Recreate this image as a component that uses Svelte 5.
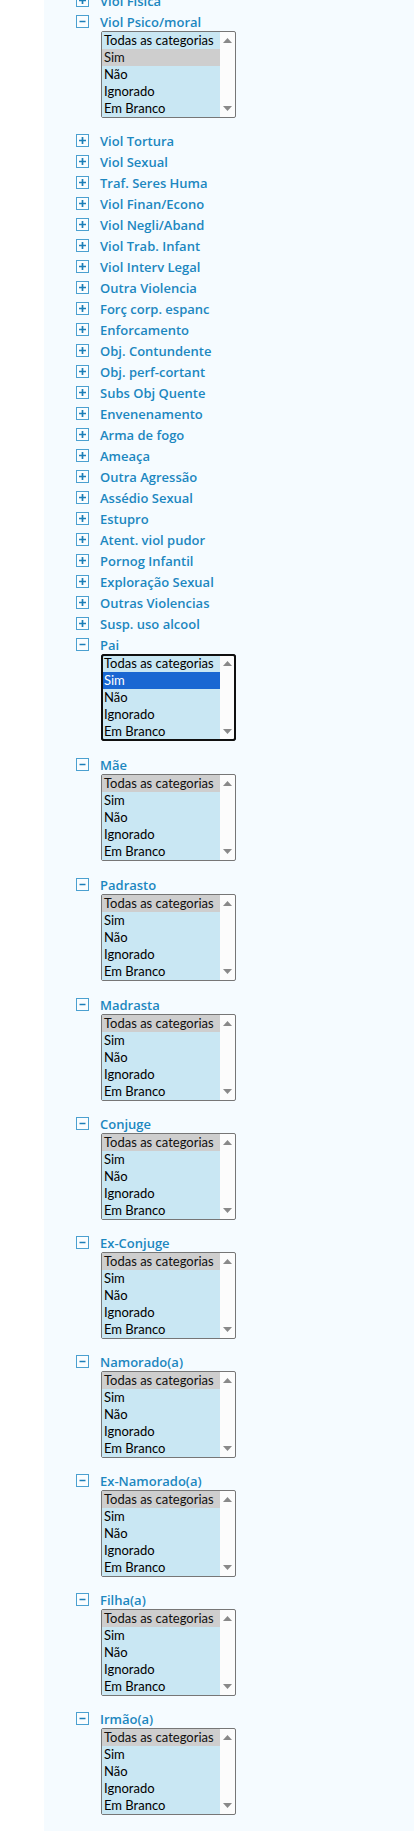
<script>
  const names = [
    'Viol Física', 'Viol Psico/moral', 'Viol Tortura', 'Viol Sexual', 'Traf. Seres Huma',
    'Viol Finan/Econo', 'Viol Negli/Aband', 'Viol Trab. Infant', 'Viol Interv Legal',
    'Outra Violencia', 'Forç corp. espanc', 'Enforcamento', 'Obj. Contundente',
    'Obj. perf-cortant', 'Subs Obj Quente', 'Envenenamento', 'Arma de fogo', 'Ameaça',
    'Outra Agressão', 'Assédio Sexual', 'Estupro', 'Atent. viol pudor', 'Pornog Infantil',
    'Exploração Sexual', 'Outras Violencias', 'Susp. uso alcool', 'Pai', 'Mãe', 'Padrasto',
    'Madrasta', 'Conjuge', 'Ex-Conjuge', 'Namorado(a)', 'Ex-Namorado(a)', 'Filha(a)', 'Irmão(a)'
  ];
  const parents = ['Pai', 'Mãe', 'Padrasto'];
  const options = ['Todas as categorias', 'Sim', 'Não', 'Ignorado', 'Em Branco'];
  const firstOpen = names.indexOf('Pai');

  let filters = $state(
    names.map((name, i) => ({
      name,
      open: name === 'Viol Psico/moral' || i >= firstOpen,
      selected: [name === 'Viol Psico/moral' || name === 'Pai' ? 'Sim' : 'Todas as categorias']
    }))
  );
  let active = $state('Pai');
  let lists = $state([]);

  function scroll(i, amount) {
    lists[i].scrollTop += amount;
  }
</script>

<main>
  <ul>
    {#each filters as filter, i (filter.name)}
      <li class:open={filter.open} class:parent={parents.includes(filter.name)}>
        <div class="head">
          <button
            class="toggle"
            aria-expanded={filter.open}
            aria-label={filter.name}
            onclick={() => (filter.open = !filter.open)}
          >
            <svg viewBox="0 0 13 13" width="13" height="13" aria-hidden="true">
              <rect x="0.5" y="0.5" width="12" height="12" fill="#fafdff" stroke="#4ba0d0" />
              {#if filter.open}
                <path d="M3.5 6.5h6" stroke="#1c7fb8" stroke-width="1.5" />
              {:else}
                <path d="M3 6.5h7M6.5 3v7" stroke="#1c7fb8" stroke-width="1.7" />
              {/if}
            </svg>
          </button>
          <label for="filter-{i}">{filter.name}</label>
        </div>
        <div class="box" class:active={active === filter.name} hidden={!filter.open}>
          <select
            id="filter-{i}"
            multiple
            size="5"
            bind:this={lists[i]}
            bind:value={filter.selected}
            onfocus={() => (active = filter.name)}
            onblur={() => (active = '')}
          >
            {#each options as option}
              <option value={option}>{option}</option>
            {/each}
          </select>
          <div class="gutter">
            <button tabindex="-1" aria-label="Rolar para cima" onclick={() => scroll(i, -17)}>
              <svg viewBox="0 0 9 5" width="9" height="5"><path d="M0 5L4.5 0L9 5z" fill="#898989" /></svg>
            </button>
            <button tabindex="-1" aria-label="Rolar para baixo" onclick={() => scroll(i, 17)}>
              <svg viewBox="0 0 9 5" width="9" height="5"><path d="M0 0L4.5 5L9 0z" fill="#898989" /></svg>
            </button>
          </div>
        </div>
      </li>
    {/each}
  </ul>
</main>

<style>
  :global(body) {
    background: #fff;
    overflow-x: hidden;
  }
  main {
    margin-left: 44px;
    padding: 0 32px 16px;
    background: #f5fbff;
    overflow: hidden;
    font-family: 'Trebuchet MS', 'Open Sans', sans-serif;
    font-size: 13px;
  }
  ul {
    list-style: none;
    margin: -9px 0 0;
    padding: 0;
  }
  li {
    margin-bottom: 2px;
  }
  li.open {
    margin-bottom: 13px;
  }
  li.open.parent {
    margin-bottom: 14px;
  }
  .head {
    display: flex;
    align-items: center;
    gap: 11px;
    height: 19px;
  }
  button {
    display: flex;
    padding: 0;
    border: 0;
    background: none;
    cursor: pointer;
  }
  label {
    padding-top: 2px;
    color: #1c87c0;
    font-weight: 600;
    line-height: 19px;
  }
  .box {
    display: flex;
    width: fit-content;
    margin-left: 25px;
    border: 1px solid #767676;
    border-radius: 2px;
    background: #fcfcfc;
  }
  .box[hidden] {
    display: none;
  }
  .box.active {
    outline: 2px solid #101010;
    outline-offset: -2px;
    border-color: #101010;
    border-radius: 3px;
  }
  select {
    display: block;
    width: 118px;
    height: 85px;
    margin: 0;
    padding: 0;
    border: 0;
    border-radius: 0;
    outline: none;
    overflow: hidden;
    background: #c9e7f3;
    color: #000;
    font-family: 'Trebuchet MS', Lato, sans-serif;
    font-size: 13px;
  }
  option {
    height: 17px;
    min-height: 17px;
    padding: 0 0 0 2px;
    box-sizing: border-box;
    line-height: 17px;
  }
  option:checked {
    background: #cecece linear-gradient(#cecece, #cecece);
    color: #101010;
  }
  .active option:checked {
    background: #1967d2 linear-gradient(#1967d2, #1967d2);
    color: #fff;
  }
  .gutter {
    display: flex;
    flex-direction: column;
    justify-content: space-between;
    align-items: center;
    width: 15px;
    padding: 6px 0;
    box-sizing: border-box;
  }
</style>
